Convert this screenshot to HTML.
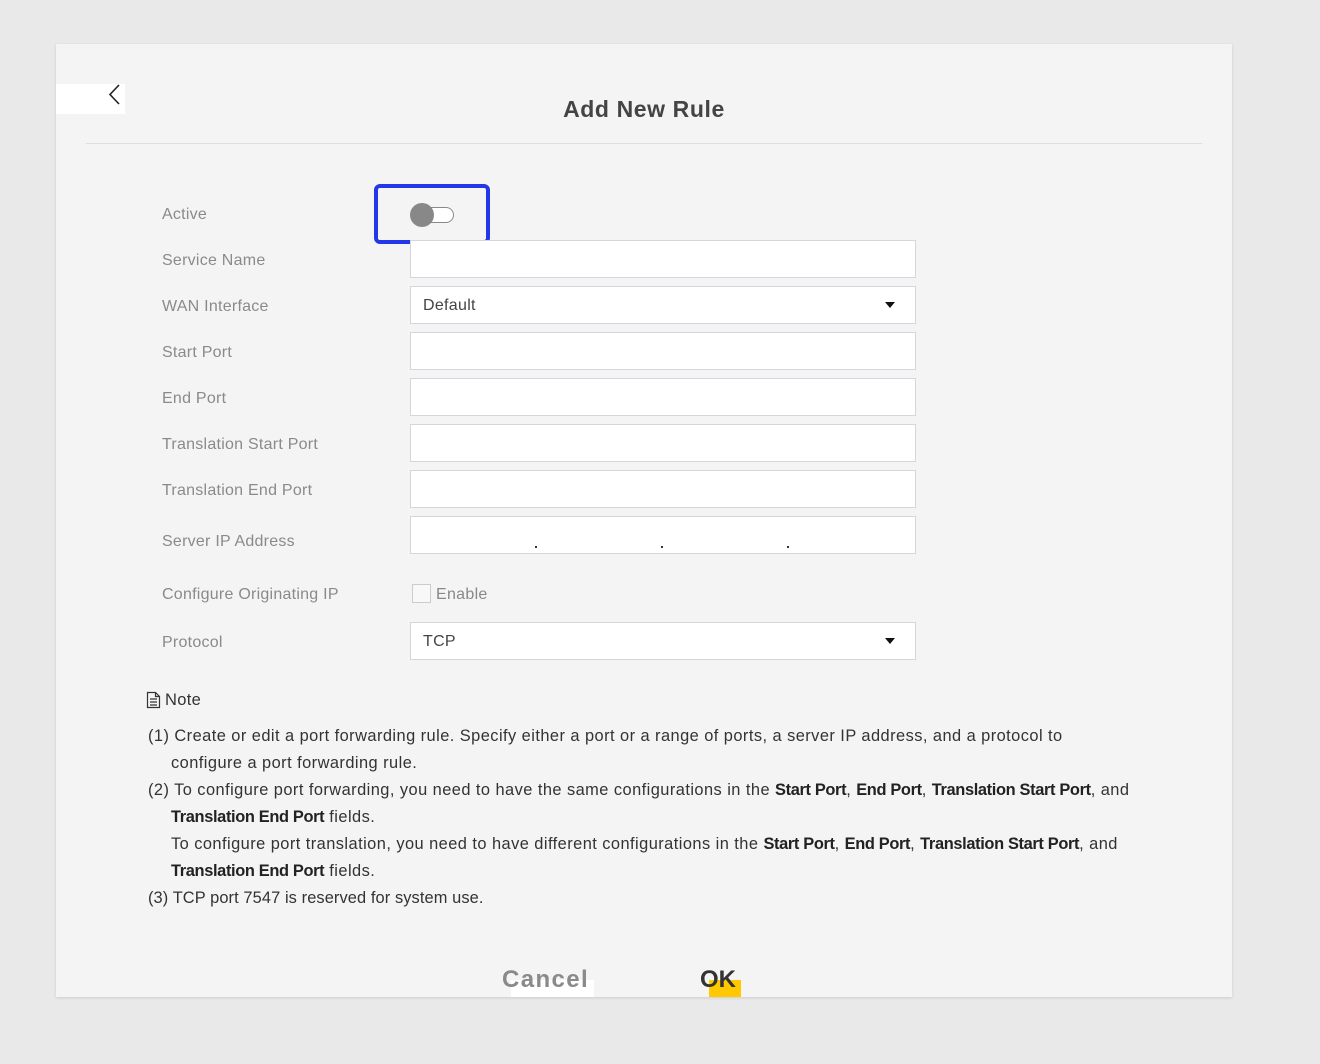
<!DOCTYPE html>
<html><head><meta charset="utf-8"><style>
*{margin:0;padding:0;box-sizing:border-box}
body{width:1320px;height:1064px;background:#e9e9e9;font-family:"Liberation Sans",sans-serif;position:relative;overflow:hidden}
.panel{position:absolute;left:56px;top:44px;width:1176px;height:953px;background:#f4f4f4;box-shadow:0 1px 3px rgba(0,0,0,.12)}
.a{position:absolute;white-space:nowrap}
.lbl{position:absolute;left:162px;font-size:16px;color:#8a8a8a;line-height:20px;letter-spacing:0.25px}
.inp{position:absolute;left:410px;width:506px;height:38px;background:#fff;border:1px solid #d3d6db}
.sel{font-size:16px;color:#444;padding:10px 12px;letter-spacing:0.3px}
.sel:after{content:"";position:absolute;right:20px;top:15px;border-left:5px solid transparent;border-right:5px solid transparent;border-top:6px solid #111}
.n{position:absolute;left:148px;font-size:16.4px;color:#333;white-space:nowrap;line-height:20px;letter-spacing:0.45px}
b{color:#222;letter-spacing:-0.35px}
</style></head><body>
<div class="panel"></div>
<div class="a" style="left:56px;top:84px;width:69px;height:30px;background:#fff"></div>
<svg class="a" style="left:106px;top:83px" width="16" height="24"><path d="M13 2 L4 11.5 L13 21" fill="none" stroke="#222" stroke-width="1.6"/></svg>
<div class="a" style="left:0;width:1288px;top:96px;text-align:center;font-size:23px;font-weight:bold;color:#444;letter-spacing:0.6px">Add New Rule</div>
<div class="a" style="left:86px;top:143px;width:1116px;height:1px;background:#ddd"></div>

<div class="lbl" style="top:205px">Active</div>
<div class="a" style="left:374px;top:184px;width:116px;height:60px;border:4px solid #2238e8;border-radius:6px"></div>
<div class="a" style="left:412px;top:207px;width:42px;height:16px;border:1px solid #888;border-radius:8px;background:#fff"></div>
<div class="a" style="left:410px;top:203px;width:24px;height:24px;border-radius:50%;background:#888"></div>

<div class="lbl" style="top:251px">Service Name</div><div class="inp" style="top:240px"></div>
<div class="lbl" style="top:297px">WAN Interface</div><div class="inp sel" style="top:286px">Default</div>
<div class="lbl" style="top:343px">Start Port</div><div class="inp" style="top:332px"></div>
<div class="lbl" style="top:389px">End Port</div><div class="inp" style="top:378px"></div>
<div class="lbl" style="top:435px">Translation Start Port</div><div class="inp" style="top:424px"></div>
<div class="lbl" style="top:481px">Translation End Port</div><div class="inp" style="top:470px"></div>
<div class="lbl" style="top:532px">Server IP Address</div><div class="inp" style="top:516px"></div>
<div class="a" style="left:535px;top:546px;width:2px;height:2px;background:#333"></div>
<div class="a" style="left:661px;top:546px;width:2px;height:2px;background:#333"></div>
<div class="a" style="left:787px;top:546px;width:2px;height:2px;background:#333"></div>
<div class="lbl" style="top:585px">Configure Originating IP</div>
<div class="a" style="left:412px;top:584px;width:19px;height:19px;border:1px solid #ccc;background:#f8f8f8"></div>
<div class="a" style="left:436px;top:586px;font-size:16px;color:#888;letter-spacing:0.3px">Enable</div>
<div class="lbl" style="top:633px">Protocol</div><div class="inp sel" style="top:622px">TCP</div>

<svg class="a" style="left:146px;top:691px" width="15" height="18"><path d="M1.5 1.5h8l4 4v11h-12z M9.5 1.5v4h4 M4 8h7 M4 11h7 M4 14h7" fill="none" stroke="#333" stroke-width="1.2"/></svg>
<div class="a" style="left:165px;top:691px;font-size:16.5px;color:#333;letter-spacing:0.3px">Note</div>
<div class="n" style="top:726px">(1) Create or edit a port forwarding rule. Specify either a port or a range of ports, a server IP address, and a protocol to</div>
<div class="n" style="top:753px;left:171px">configure a port forwarding rule.</div>
<div class="n" style="top:780px">(2) To configure port forwarding, you need to have the same configurations in the <b>Start Port</b>, <b>End Port</b>, <b>Translation Start Port</b>, and</div>
<div class="n" style="top:807px;left:171px"><b>Translation End Port</b> fields.</div>
<div class="n" style="top:834px;left:171px">To configure port translation, you need to have different configurations in the <b>Start Port</b>, <b>End Port</b>, <b>Translation Start Port</b>, and</div>
<div class="n" style="top:861px;left:171px"><b>Translation End Port</b> fields.</div>
<div class="n" style="top:888px;letter-spacing:0.1px">(3) TCP port 7547 is reserved for system use.</div>

<div class="a" style="left:511px;top:980px;width:83px;height:17px;background:#fff"></div>
<div class="a" style="left:502px;top:966px;font-size:24px;font-weight:bold;color:#8a8a8a;letter-spacing:1.4px">Cancel</div>
<div class="a" style="left:709px;top:980px;width:32px;height:17px;background:#ffc800"></div>
<div class="a" style="left:700px;top:966px;font-size:24px;font-weight:bold;color:#333">OK</div>
</body></html>
